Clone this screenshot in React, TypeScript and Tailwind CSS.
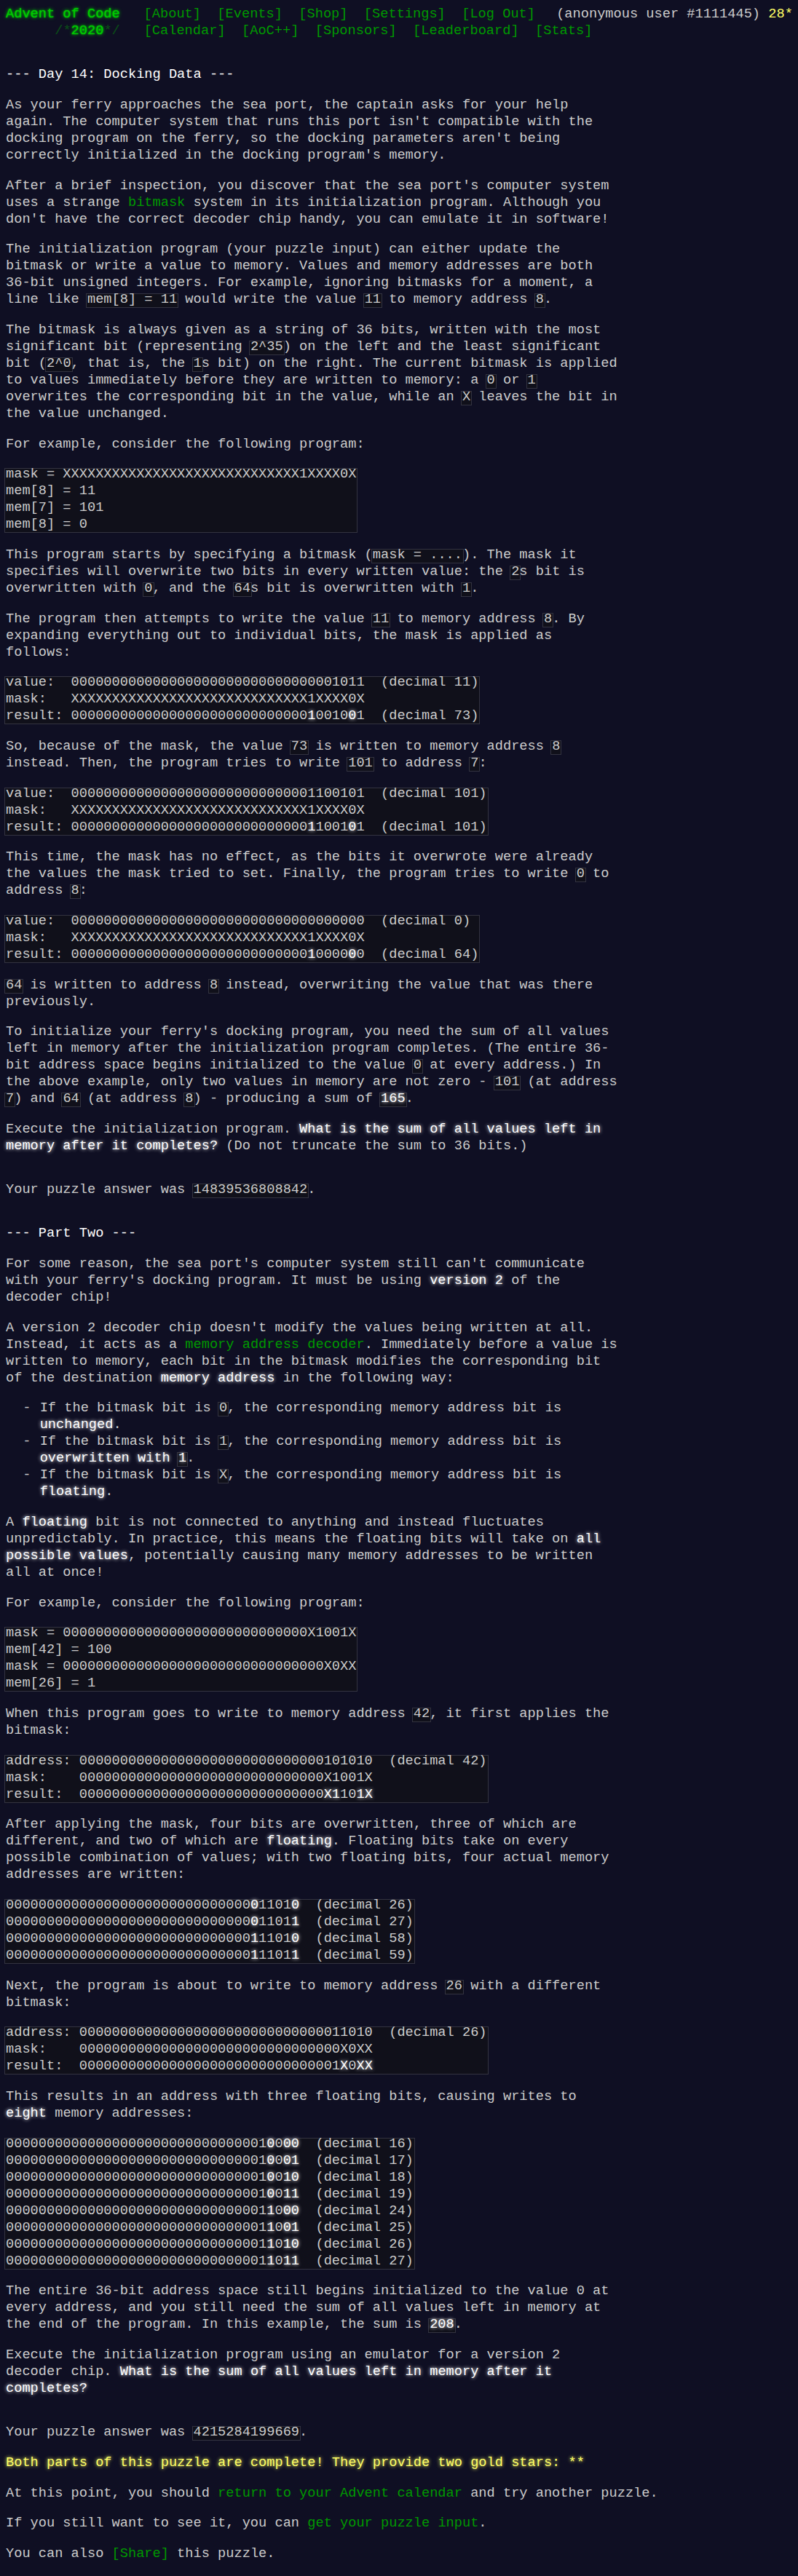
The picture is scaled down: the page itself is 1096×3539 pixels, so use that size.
import React from "react";

type K = { children?: React.ReactNode };

const codeCls =
  "relative inline-block font-['Liberation_Mono',monospace] text-[1em] before:content-[''] before:absolute before:-left-[2px] before:-right-[2px] before:top-[3px] before:bottom-0 before:border before:border-[#333340] before:bg-[#10101a] before:-z-10";

const E = ({ children }: K) => (
  <em className="not-italic text-white [text-shadow:0_0_5px_#ffffff]">{children}</em>
);
const C = ({ children }: K) => <code className={codeCls}>{children}</code>;
const A = ({ children }: K) => <a className="text-[#009900] no-underline">{children}</a>;
const P = ({ children }: K) => <p className="mb-[1em]">{children}</p>;
const Row = ({ children }: K) => <span className="block">{children}</span>;
const Pre = ({ children }: K) => (
  <pre className="mb-[1em] font-['Liberation_Mono',monospace] text-[1em] leading-[23px] whitespace-pre">
    <code className={codeCls + " align-top"}>{children}</code>
  </pre>
);

const Z = (n: number) => "0".repeat(n);
const X = (n: number) => "X".repeat(n);

const nav1 = ["[About]", "[Events]", "[Shop]", "[Settings]", "[Log Out]"];
const nav2 = ["[Calendar]", "[AoC++]", "[Sponsors]", "[Leaderboard]", "[Stats]"];

export default function App() {
  return (
    <div className="isolate min-h-screen bg-[#0f0f23] text-[#cccccc] font-['Liberation_Mono',monospace] text-[18.667px] leading-[23px] p-2">
      <header className="whitespace-nowrap mb-[2em]">
        <div className="flex">
          <h1 className="pr-[1em]">
            <a className="text-[#00cc00] [text-shadow:0_0_2px_#00cc00,0_0_5px_#00cc00]">Advent of Code</a>
          </h1>
          <ul className="flex ml-[3px]">
            {nav1.map((n) => (
              <li key={n} className="px-[0.6em]">
                <a className="text-[#009900]">{n}</a>
              </li>
            ))}
          </ul>
          <div className="ml-[18px] text-[#cccccc]">
            (anonymous user #1111445) <span className="text-[#ffff66]">28*</span>
          </div>
        </div>
        <div className="flex">
          <h1 className="pr-[1em] text-[#00cc00]">
            {"\u00a0\u00a0\u00a0\u00a0\u00a0\u00a0"}
            <span className="opacity-[0.33]">/*</span>
            <a className="text-[#00cc00] [text-shadow:0_0_2px_#00cc00,0_0_5px_#00cc00]">2020</a>
            <span className="opacity-[0.33]">*/</span>
          </h1>
          <ul className="flex ml-[3px]">
            {nav2.map((n) => (
              <li key={n} className="px-[0.6em]">
                <a className="text-[#009900]">{n}</a>
              </li>
            ))}
          </ul>
        </div>
      </header>

      <main>
        <article className="w-[842px]">
          <h2 className="text-white mb-[1em]">--- Day 14: Docking Data ---</h2>
          <P>As your ferry approaches the sea port, the captain asks for your help again. The computer system that runs this port isn't compatible with the docking program on the ferry, so the docking parameters aren't being correctly initialized in the docking program's memory.</P>
          <P>After a brief inspection, you discover that the sea port's computer system uses a strange <A>bitmask</A> system in its initialization program. Although you don't have the correct decoder chip handy, you can emulate it in software!</P>
          <P>The initialization program (your puzzle input) can either update the bitmask or write a value to memory. Values and memory addresses are both 36-bit unsigned integers. For example, ignoring bitmasks for a moment, a line like <C>mem[8] = 11</C> would write the value <C>11</C> to memory address <C>8</C>.</P>
          <P>The bitmask is always given as a string of 36 bits, written with the most significant bit (representing <C>2^35</C>) on the left and the least significant bit (<C>2^0</C>, that is, the <C>1</C>s bit) on the right. The current bitmask is applied to values immediately before they are written to memory: a <C>0</C> or <C>1</C> overwrites the corresponding bit in the value, while an <C>X</C> leaves the bit in the value unchanged.</P>
          <P>For example, consider the following program:</P>
          <Pre>
            <Row>{"mask = " + X(29) + "1XXXX0X"}</Row>
            <Row>mem[8] = 11</Row>
            <Row>mem[7] = 101</Row>
            <Row>mem[8] = 0</Row>
          </Pre>
          <P>This program starts by specifying a bitmask (<C>mask = ....</C>). The mask it specifies will overwrite two bits in every written value: the <C>2</C>s bit is overwritten with <C>0</C>, and the <C>64</C>s bit is overwritten with <C>1</C>.</P>
          <P>The program then attempts to write the value <C>11</C> to memory address <C>8</C>. By expanding everything out to individual bits, the mask is applied as follows:</P>
          <Pre>
            <Row>{"value:  " + Z(32) + "1011  (decimal 11)"}</Row>
            <Row>{"mask:   " + X(29) + "1XXXX0X"}</Row>
            <Row>{"result: " + Z(29)}<E>1</E>0010<E>0</E>1{"  (decimal 73)"}</Row>
          </Pre>
          <P>So, because of the mask, the value <C>73</C> is written to memory address <C>8</C> instead. Then, the program tries to write <C>101</C> to address <C>7</C>:</P>
          <Pre>
            <Row>{"value:  " + Z(29) + "1100101  (decimal 101)"}</Row>
            <Row>{"mask:   " + X(29) + "1XXXX0X"}</Row>
            <Row>{"result: " + Z(29)}<E>1</E>1001<E>0</E>1{"  (decimal 101)"}</Row>
          </Pre>
          <P>This time, the mask has no effect, as the bits it overwrote were already the values the mask tried to set. Finally, the program tries to write <C>0</C> to address <C>8</C>:</P>
          <Pre>
            <Row>{"value:  " + Z(36) + "  (decimal 0)"}</Row>
            <Row>{"mask:   " + X(29) + "1XXXX0X"}</Row>
            <Row>{"result: " + Z(29)}<E>1</E>0000<E>0</E>0{"  (decimal 64)"}</Row>
          </Pre>
          <P><C>64</C> is written to address <C>8</C> instead, overwriting the value that was there previously.</P>
          <P>To initialize your ferry's docking program, you need the sum of all values left in memory after the initialization program completes. (The entire 36-bit address space begins initialized to the value <C>0</C> at every address.) In the above example, only two values in memory are not zero - <C>101</C> (at address <C>7</C>) and <C>64</C> (at address <C>8</C>) - producing a sum of <C><E>165</E></C>.</P>
          <p>Execute the initialization program. <E>What is the sum of all values left in memory after it completes?</E> (Do not truncate the sum to 36 bits.)</p>
        </article>

        <p className="my-[2em]">Your puzzle answer was <C>14839536808842</C>.</p>

        <article className="w-[842px]">
          <h2 className="text-white mb-[1em]">--- Part Two ---</h2>
          <P>For some reason, the sea port's computer system still can't communicate with your ferry's docking program. It must be using <E>version 2</E> of the decoder chip!</P>
          <P>A version 2 decoder chip doesn't modify the values being written at all. Instead, it acts as a <A>memory address decoder</A>. Immediately before a value is written to memory, each bit in the bitmask modifies the corresponding bit of the destination <E>memory address</E> in the following way:</P>
          <ul className="mb-[1em]">
            <li className="relative pl-[2.5em] before:content-['-'] before:absolute before:left-[1.25em]">If the bitmask bit is <C>0</C>, the corresponding memory address bit is <E>unchanged</E>.</li>
            <li className="relative pl-[2.5em] before:content-['-'] before:absolute before:left-[1.25em]">If the bitmask bit is <C>1</C>, the corresponding memory address bit is <E>overwritten with <C>1</C></E>.</li>
            <li className="relative pl-[2.5em] before:content-['-'] before:absolute before:left-[1.25em]">If the bitmask bit is <C>X</C>, the corresponding memory address bit is <E>floating</E>.</li>
          </ul>
          <P>A <E>floating</E> bit is not connected to anything and instead fluctuates unpredictably. In practice, this means the floating bits will take on <E>all possible values</E>, potentially causing many memory addresses to be written all at once!</P>
          <P>For example, consider the following program:</P>
          <Pre>
            <Row>{"mask = " + Z(30) + "X1001X"}</Row>
            <Row>mem[42] = 100</Row>
            <Row>{"mask = " + Z(32) + "X0XX"}</Row>
            <Row>mem[26] = 1</Row>
          </Pre>
          <P>When this program goes to write to memory address <C>42</C>, it first applies the bitmask:</P>
          <Pre>
            <Row>{"address: " + Z(30) + "101010  (decimal 42)"}</Row>
            <Row>{"mask:    " + Z(30) + "X1001X"}</Row>
            <Row>{"result:  " + Z(30)}<E>X1</E>10<E>1X</E></Row>
          </Pre>
          <P>After applying the mask, four bits are overwritten, three of which are different, and two of which are <E>floating</E>. Floating bits take on every possible combination of values; with two floating bits, four actual memory addresses are written:</P>
          <Pre>
            <Row>{Z(30)}<E>0</E>1101<E>0</E>{"  (decimal 26)"}</Row>
            <Row>{Z(30)}<E>0</E>1101<E>1</E>{"  (decimal 27)"}</Row>
            <Row>{Z(30)}<E>1</E>1101<E>0</E>{"  (decimal 58)"}</Row>
            <Row>{Z(30)}<E>1</E>1101<E>1</E>{"  (decimal 59)"}</Row>
          </Pre>
          <P>Next, the program is about to write to memory address <C>26</C> with a different bitmask:</P>
          <Pre>
            <Row>{"address: " + Z(30) + "011010  (decimal 26)"}</Row>
            <Row>{"mask:    " + Z(32) + "X0XX"}</Row>
            <Row>{"result:  " + Z(31) + "1"}<E>X</E>0<E>XX</E></Row>
          </Pre>
          <P>This results in an address with three floating bits, causing writes to <E>eight</E> memory addresses:</P>
          <Pre>
            <Row>{Z(31) + "1"}<E>0</E>0<E>00</E>{"  (decimal 16)"}</Row>
            <Row>{Z(31) + "1"}<E>0</E>0<E>01</E>{"  (decimal 17)"}</Row>
            <Row>{Z(31) + "1"}<E>0</E>0<E>10</E>{"  (decimal 18)"}</Row>
            <Row>{Z(31) + "1"}<E>0</E>0<E>11</E>{"  (decimal 19)"}</Row>
            <Row>{Z(31) + "1"}<E>1</E>0<E>00</E>{"  (decimal 24)"}</Row>
            <Row>{Z(31) + "1"}<E>1</E>0<E>01</E>{"  (decimal 25)"}</Row>
            <Row>{Z(31) + "1"}<E>1</E>0<E>10</E>{"  (decimal 26)"}</Row>
            <Row>{Z(31) + "1"}<E>1</E>0<E>11</E>{"  (decimal 27)"}</Row>
          </Pre>
          <P>The entire 36-bit address space still begins initialized to the value 0 at every address, and you still need the sum of all values left in memory at the end of the program. In this example, the sum is <C><E>208</E></C>.</P>
          <p>Execute the initialization program using an emulator for a version 2 decoder chip. <E>What is the sum of all values left in memory after it completes?</E></p>
        </article>

        <p className="mt-[2em] mb-[1em]">Your puzzle answer was <C>4215284199669</C>.</p>
        <p className="mb-[1em] text-[#ffff66] [text-shadow:0_0_5px_#ffff66]">Both parts of this puzzle are complete! They provide two gold stars: **</p>
        <P>At this point, you should <A>return to your Advent calendar</A> and try another puzzle.</P>
        <P>If you still want to see it, you can <A>get your puzzle input</A>.</P>
        <P>You can also <span className="text-[#009900]">[Share]</span> this puzzle.</P>
      </main>
    </div>
  );
}
